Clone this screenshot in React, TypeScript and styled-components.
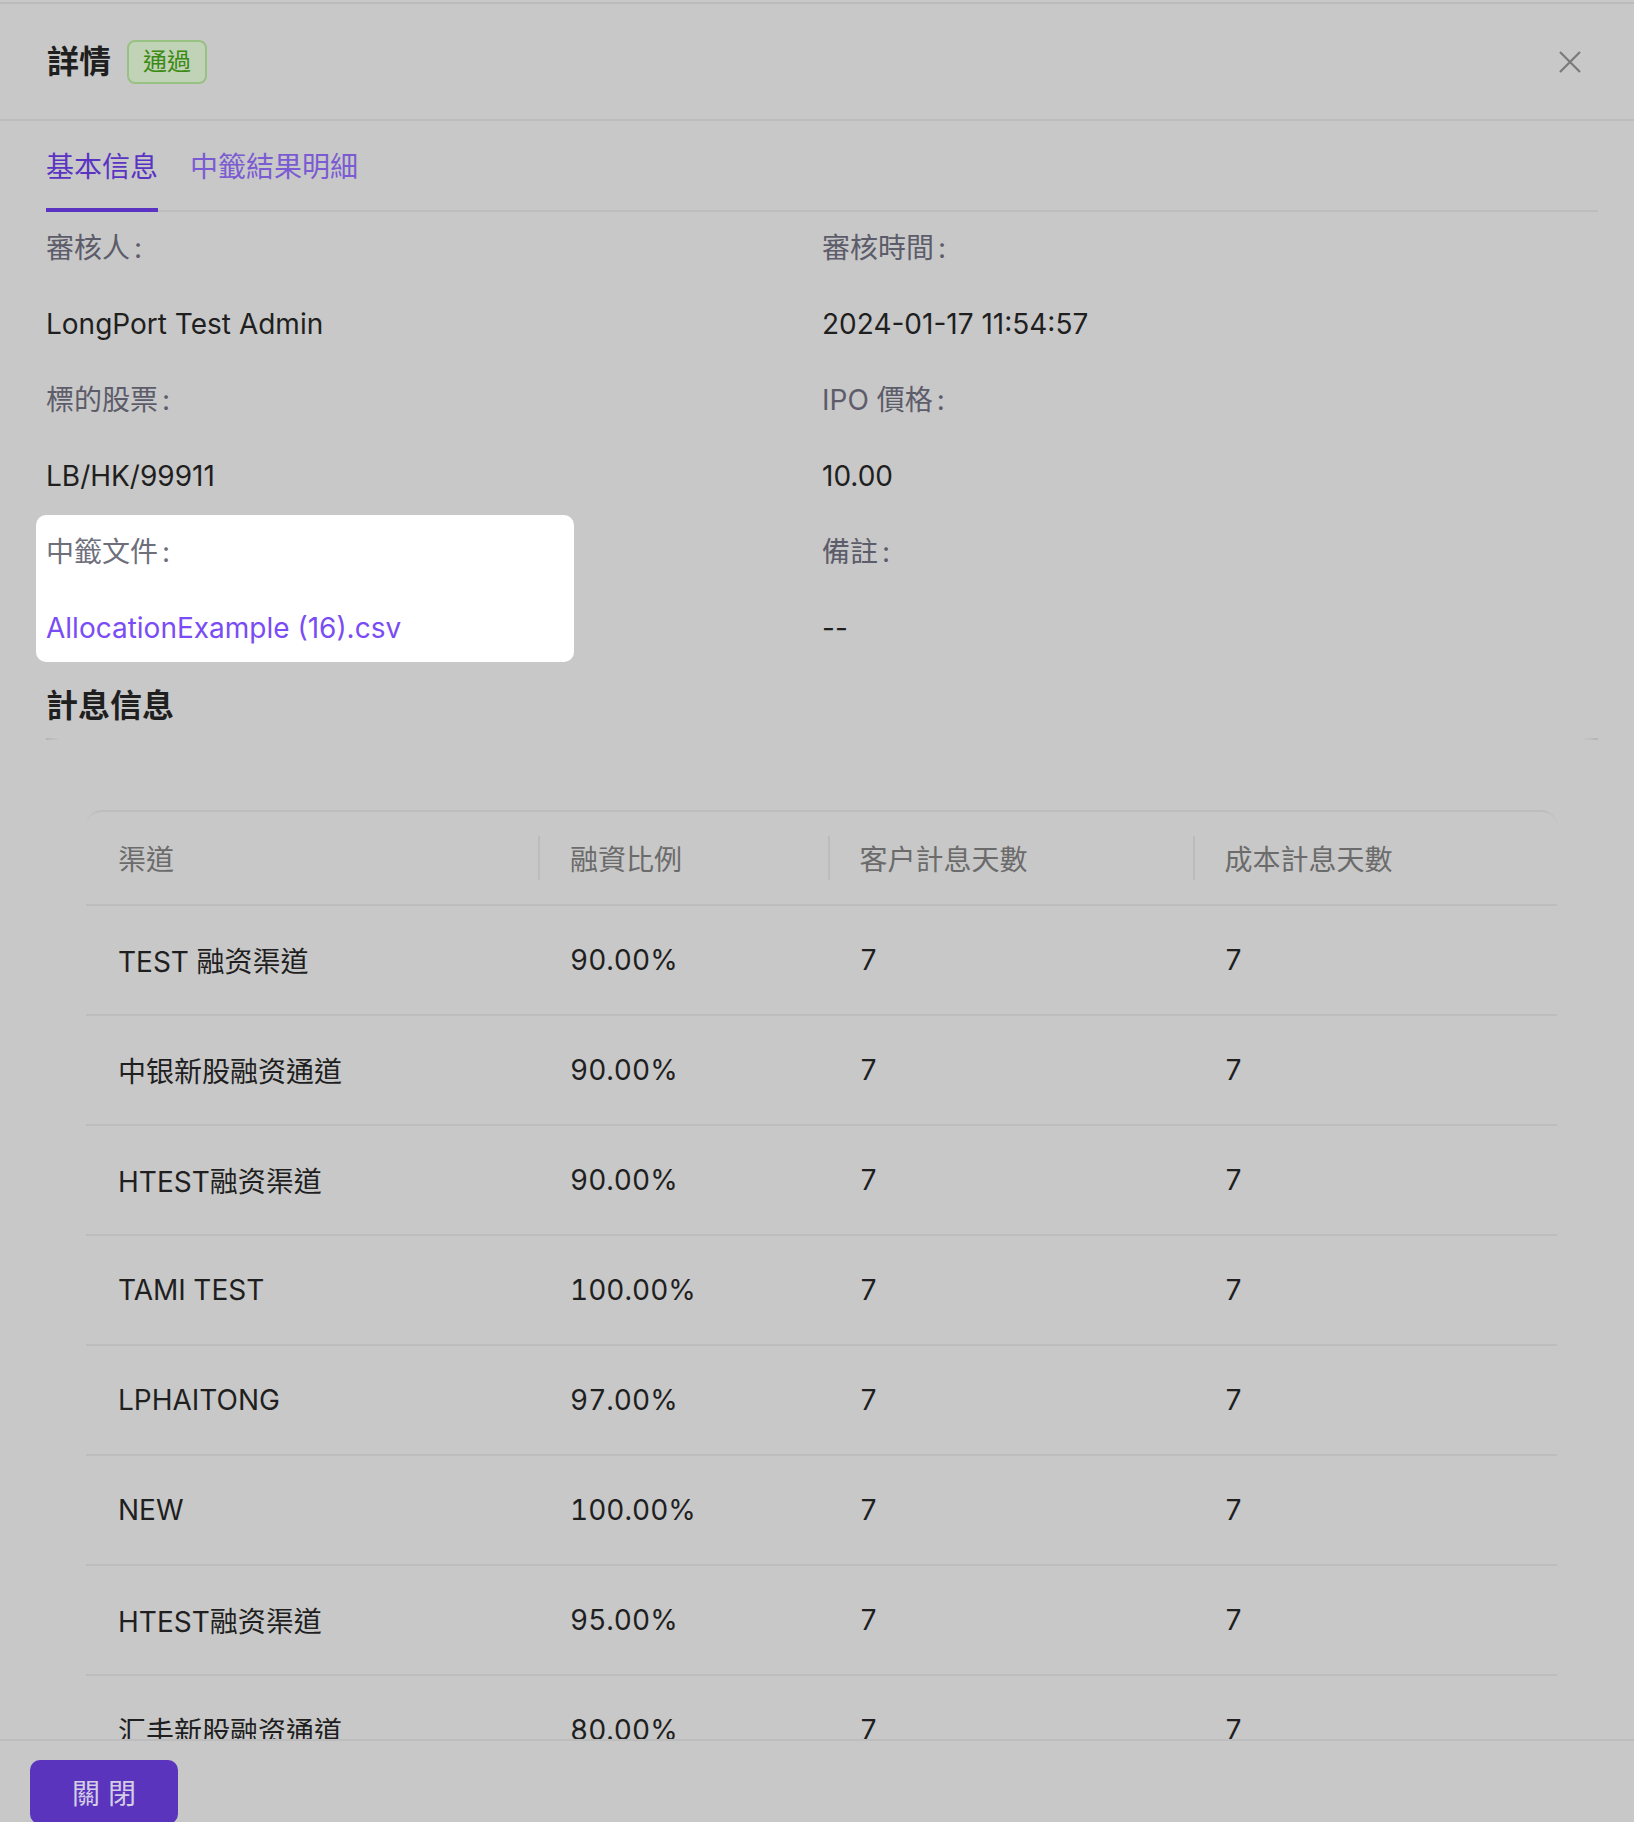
import React from 'react';
import styled, { createGlobalStyle } from 'styled-components';

const FONT = `Inter, "Noto Sans CJK TC", "Noto Sans CJK SC", sans-serif`;

const GlobalStyle = createGlobalStyle`
  html, body { margin: 0; padding: 0; background: #c8c8c8; }
  body { font-family: ${FONT}; }
  * { box-sizing: border-box; }
`;

const Modal = styled.div`
  width: 1634px;
  height: 1822px;
  padding-top: 2px;
  display: flex;
  flex-direction: column;
  overflow: hidden;
  background: #c8c8c8;
  font-family: ${FONT};
`;

const Header = styled.header`
  flex-shrink: 0;
  height: 119px;
  border-top: 2px solid #bcbcbc;
  border-bottom: 2px solid #bdbdbd;
  padding: 0 50px 0 47px;
  display: flex;
  align-items: center;
`;

const Title = styled.h1`
  margin: 0;
  font-size: 32px;
  font-weight: 700;
  line-height: 44px;
  color: #1f1f1f;
`;

const Badge = styled.span`
  margin-left: 16px;
  height: 44px;
  padding: 0 14px;
  border: 2px solid #98c184;
  border-radius: 8px;
  background: #c0d3b6;
  color: #3b8a14;
  font-size: 24px;
  line-height: 40px;
`;

const CloseButton = styled.button`
  margin-left: auto;
  width: 28px;
  height: 28px;
  padding: 0;
  border: none;
  background: transparent;
  display: flex;
  align-items: center;
  justify-content: center;
`;

const Body = styled.main`
  flex: 1;
  min-height: 0;
  overflow: hidden;
  padding: 0 36px 0 46px;
`;

const TabNav = styled.nav`
  height: 91px;
  display: flex;
  align-items: flex-start;
  gap: 32px;
  border-bottom: 2px solid #bdbdbd;
`;

const Tab = styled.div<{ $active?: boolean }>`
  height: 91px;
  padding-bottom: 4px;
  display: flex;
  align-items: center;
  font-size: 28px;
  color: ${(p) => (p.$active ? '#5a33c3' : '#7b5bd2')};
  box-shadow: ${(p) => (p.$active ? 'inset 0 -4px 0 #5a33c3' : 'none')};
`;

const DescGrid = styled.section`
  padding-top: 14px;
  display: grid;
  grid-template-columns: 1fr 1fr;
  row-gap: 32px;
`;

const Item = styled.div<{ $highlight?: boolean }>`
  display: flex;
  flex-direction: column;
  gap: 32px;
  justify-self: start;
  ${(p) =>
    p.$highlight
      ? `
    background: #ffffff;
    border-radius: 10px;
    margin: -15px -10px -12px;
    padding: 15px 10px 12px;
    width: 538px;
  `
      : ''}
`;

const Label = styled.div<{ $highlight?: boolean }>`
  font-size: 28px;
  line-height: 44px;
  color: ${(p) => (p.$highlight ? '#6f6f7c' : '#5c5c6a')};
`;

const Colon = styled.span`
  margin-left: 4px;
`;

const Value = styled.div`
  font-size: 28px;
  line-height: 44px;
  color: #1f1f1f;
`;

const Link = styled.a`
  font-size: 28px;
  line-height: 44px;
  color: #7a4cf5;
  text-decoration: none;
`;

const SectionTitle = styled.h2`
  margin: 34px 0 0;
  font-size: 32px;
  font-weight: 700;
  line-height: 44px;
  color: #1f1f1f;
`;

const FadeLine = styled.div`
  margin-top: 10px;
  height: 2px;
  background: linear-gradient(
    to right,
    #b4b4b4 0,
    #c8c8c8 14px,
    #c8c8c8 calc(100% - 16px),
    #b4b4b4 100%
  );
`;

const TableWrap = styled.div`
  margin: 70px 41px 0 40px;
  border-top: 2px solid #bdbdbd;
  border-radius: 16px 16px 0 0;
`;

const Table = styled.table`
  width: 100%;
  table-layout: fixed;
  border-collapse: separate;
  border-spacing: 0;
`;

const Th = styled.th<{ $divider?: boolean }>`
  height: 94px;
  padding: 0 0 0 32px;
  text-align: left;
  font-size: 28px;
  font-weight: 400;
  color: #6b6b6b;
  border-bottom: 2px solid #bdbdbd;
  background: ${(p) =>
    p.$divider
      ? 'linear-gradient(#bcbcbc, #bcbcbc) left center / 2px 44px no-repeat'
      : 'none'};
`;

const Td = styled.td`
  height: 110px;
  padding: 0 0 0 32px;
  font-size: 28px;
  color: #1f1f1f;
  border-bottom: 2px solid #bdbdbd;
  white-space: nowrap;
  font-variant-numeric: tabular-nums;
`;

const Footer = styled.footer`
  flex-shrink: 0;
  height: 83px;
  overflow: hidden;
  border-top: 2px solid #bdbdbd;
  padding: 19px 0 0 30px;
`;

const PrimaryButton = styled.button`
  width: 148px;
  height: 64px;
  border: none;
  border-radius: 10px;
  background: #5a34bd;
  color: #d4cde6;
  font-family: ${FONT};
  font-size: 28px;
`;

const rows = [
  ['TEST 融资渠道', '90.00%', '7', '7'],
  ['中银新股融资通道', '90.00%', '7', '7'],
  ['HTEST融资渠道', '90.00%', '7', '7'],
  ['TAMI TEST', '100.00%', '7', '7'],
  ['LPHAITONG', '97.00%', '7', '7'],
  ['NEW', '100.00%', '7', '7'],
  ['HTEST融资渠道', '95.00%', '7', '7'],
  ['汇丰新股融资通道', '80.00%', '7', '7'],
];

const headers = ['渠道', '融資比例', '客户計息天數', '成本計息天數'];
const colWidths = [452, 289.5, 365, 364.5];

const fields: { label: string; value: string; link?: boolean }[] = [
  { label: '審核人', value: 'LongPort Test Admin' },
  { label: '審核時間', value: '2024-01-17 11:54:57' },
  { label: '標的股票', value: 'LB/HK/99911' },
  { label: 'IPO 價格', value: '10.00' },
  { label: '中籤文件', value: 'AllocationExample (16).csv', link: true },
  { label: '備註', value: '--' },
];

export default function App() {
  return (
    <>
      <GlobalStyle />
      <Modal>
        <Header>
          <Title>詳情</Title>
          <Badge>通過</Badge>
          <CloseButton aria-label="close">
            <svg width="24" height="24" viewBox="0 0 24 24">
              <path d="M2 2 L22 22 M22 2 L2 22" stroke="#7a7a7a" strokeWidth="2.2" fill="none" />
            </svg>
          </CloseButton>
        </Header>
        <Body>
          <TabNav>
            <Tab $active>基本信息</Tab>
            <Tab>中籤結果明細</Tab>
          </TabNav>
          <DescGrid>
            {fields.map((f) => (
              <Item key={f.label} $highlight={f.link}>
                <Label $highlight={f.link}>
                  {f.label}
                  <Colon>:</Colon>
                </Label>
                {f.link ? <Link href="#">{f.value}</Link> : <Value>{f.value}</Value>}
              </Item>
            ))}
          </DescGrid>
          <SectionTitle>計息信息</SectionTitle>
          <FadeLine />
          <TableWrap>
            <Table>
              <colgroup>
                {colWidths.map((w, i) => (
                  <col key={i} style={{ width: w }} />
                ))}
              </colgroup>
              <thead>
                <tr>
                  {headers.map((h, i) => (
                    <Th key={h} $divider={i > 0}>
                      {h}
                    </Th>
                  ))}
                </tr>
              </thead>
              <tbody>
                {rows.map((r, i) => (
                  <tr key={i}>
                    {r.map((c, j) => (
                      <Td key={j}>{c}</Td>
                    ))}
                  </tr>
                ))}
              </tbody>
            </Table>
          </TableWrap>
        </Body>
        <Footer>
          <PrimaryButton>關 閉</PrimaryButton>
        </Footer>
      </Modal>
    </>
  );
}
